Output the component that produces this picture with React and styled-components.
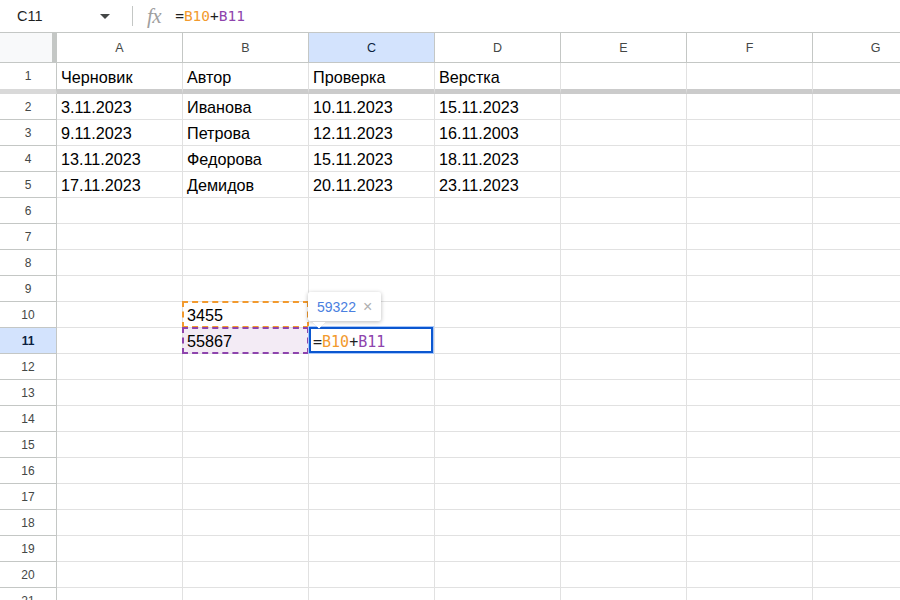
import React from "react";
import styled, { createGlobalStyle, css } from "styled-components";

const Global = createGlobalStyle`
  html, body { margin: 0; padding: 0; background: #fff; }
  body { font-family: "Liberation Sans", Arial, sans-serif; overflow: hidden; }
`;

const Page = styled.div`
  width: 900px;
  height: 600px;
  overflow: hidden;
  background: #fff;
`;

const Toolbar = styled.div`
  display: flex;
  align-items: center;
  height: 32px;
  border-bottom: 1px solid #c4c7c5;
  box-sizing: content-box;
`;

const NameBox = styled.div`
  width: 124px;
  display: flex;
  align-items: center;
  justify-content: space-between;
  padding: 0 14px 0 17px;
  box-sizing: border-box;
  font-size: 14.5px;
  color: #1f1f1f;
`;

const Caret = styled.span`
  width: 0;
  height: 0;
  border-left: 5px solid transparent;
  border-right: 5px solid transparent;
  border-top: 5px solid #444746;
`;

const Separator = styled.div`
  width: 1px;
  height: 20px;
  background: #c4c7c5;
  margin: 0 14px 0 8px;
`;

const Fx = styled.span`
  font-family: "Liberation Serif", "DejaVu Serif", serif;
  font-style: italic;
  font-size: 21px;
  color: #a0a0a0;
  margin-right: 14px;
  letter-spacing: -0.5px;
`;

const Formula = styled.div`
  font-family: "DejaVu Sans Mono", "Liberation Mono", monospace;
  font-size: ${(p) => p.$size || 14.5}px;
  color: #1f1f1f;
  white-space: nowrap;
`;

const Ref = styled.span`
  color: ${(p) => p.$color};
`;

const Row = styled.div`
  display: flex;
  height: ${(p) => (p.$frozen ? 31 : 26)}px;
`;

const HeaderRow = styled.div`
  display: flex;
  height: 30px;
`;

const Corner = styled.div`
  width: 57px;
  flex: none;
  box-sizing: border-box;
  background: #f8f9fa;
  border-right: 5px solid #c4c7c5;
  border-bottom: 1px solid #c4c7c5;
`;

const ColHead = styled.div`
  width: 126px;
  flex: none;
  box-sizing: border-box;
  border-right: 1px solid #c4c7c5;
  border-bottom: 1px solid #c4c7c5;
  display: flex;
  align-items: center;
  justify-content: center;
  font-size: 12.5px;
  color: #444746;
  padding-top: 1px;
  ${(p) =>
    p.$active &&
    css`
      background: #d3e3fd;
      color: #0b1f40;
    `}
`;

const RowHead = styled.div`
  width: 57px;
  flex: none;
  box-sizing: border-box;
  border-right: 1px solid #c4c7c5;
  border-bottom: ${(p) => (p.$frozen ? "5px solid #d9d9d9" : "1px solid #c4c7c5")};
  display: flex;
  align-items: center;
  justify-content: center;
  font-size: 12px;
  color: #444746;
  ${(p) =>
    p.$active &&
    css`
      background: #d3e3fd;
      color: #0b1f40;
      font-weight: bold;
    `}
`;

const Cell = styled.div`
  position: relative;
  width: 126px;
  flex: none;
  box-sizing: border-box;
  border-right: 1px solid #e1e1e1;
  border-bottom: ${(p) => (p.$frozen ? "5px solid #cbcbcb" : "1px solid #e1e1e1")};
  padding: 2px 4px 0;
  display: flex;
  align-items: center;
  font-size: 16.2px;
  color: #000;
  white-space: nowrap;
  background: ${(p) => p.$bg || "transparent"};
`;

const Marquee = styled.div`
  position: absolute;
  left: -1px;
  top: -1px;
  right: -1px;
  bottom: -1px;
  border: 2px dashed ${(p) => p.$color};
  pointer-events: none;
`;

const ActiveFrame = styled.div`
  position: absolute;
  left: -1px;
  top: -2px;
  right: 0;
  bottom: -1px;
  border: 1px solid #a8c7fa;
  &::after {
    content: "";
    position: absolute;
    inset: 0;
    border: 2px solid #0b57d0;
  }
`;

const Tip = styled.div`
  position: absolute;
  left: -1px;
  top: -10px;
  width: 73px;
  height: 29px;
  box-sizing: border-box;
  background: #fff;
  border-radius: 2px;
  box-shadow: 0 1px 4px rgba(0, 0, 0, 0.28);
  display: flex;
  align-items: center;
  padding-left: 9px;
  gap: 7px;
  z-index: 3;
  &::after {
    content: "";
    position: absolute;
    left: 6px;
    bottom: -6px;
    width: 10px;
    height: 10px;
    background: #fff;
    transform: rotate(45deg);
    box-shadow: 2px 2px 3px rgba(0, 0, 0, 0.18);
    clip-path: polygon(100% 0, 100% 100%, 0 100%);
  }
`;

const TipValue = styled.span`
  font-size: 14px;
  color: #4a7fe0;
`;

const TipClose = styled.span`
  font-size: 16px;
  color: #b0b0b0;
  line-height: 1;
`;

const cols = ["A", "B", "C", "D", "E", "F", "G"];

const data = {
  1: ["Черновик", "Автор", "Проверка", "Верстка"],
  2: ["3.11.2023", "Иванова", "10.11.2023", "15.11.2023"],
  3: ["9.11.2023", "Петрова", "12.11.2023", "16.11.2003"],
  4: ["13.11.2023", "Федорова", "15.11.2023", "18.11.2023"],
  5: ["17.11.2023", "Демидов", "20.11.2023", "23.11.2023"],
};

const FormulaText = () => (
  <>
    =<Ref $color="#f29a2e">B10</Ref>+<Ref $color="#8e44ad">B11</Ref>
  </>
);

export default function App() {
  const rows = Array.from({ length: 22 }, (_, i) => i + 1);
  return (
    <Page>
      <Global />
      <Toolbar>
        <NameBox>
          C11
          <Caret />
        </NameBox>
        <Separator />
        <Fx>fx</Fx>
        <Formula>
          <FormulaText />
        </Formula>
      </Toolbar>
      <HeaderRow>
        <Corner />
        {cols.map((c) => (
          <ColHead key={c} $active={c === "C"}>
            {c}
          </ColHead>
        ))}
      </HeaderRow>
      {rows.map((r) => {
        const frozen = r === 1;
        return (
          <Row key={r} $frozen={frozen}>
            <RowHead $frozen={frozen} $active={r === 11}>
              {r}
            </RowHead>
            {cols.map((c, ci) => {
              let content = data[r] ? data[r][ci] : null;
              let extra = null;
              let bg;
              if (r === 10 && c === "B") {
                content = "3455";
                extra = <Marquee $color="#f29a2e" />;
              }
              if (r === 11 && c === "B") {
                content = "55867";
                bg = "#f3ebf5";
                extra = <Marquee $color="#8e44ad" />;
              }
              if (r === 10 && c === "C") {
                extra = (
                  <Tip>
                    <TipValue>59322</TipValue>
                    <TipClose>×</TipClose>
                  </Tip>
                );
              }
              if (r === 11 && c === "C") {
                content = (
                  <Formula $size={15}>
                    <FormulaText />
                  </Formula>
                );
                extra = <ActiveFrame />;
              }
              return (
                <Cell key={c} $frozen={frozen} $bg={bg}>
                  {content}
                  {extra}
                </Cell>
              );
            })}
          </Row>
        );
      })}
    </Page>
  );
}
